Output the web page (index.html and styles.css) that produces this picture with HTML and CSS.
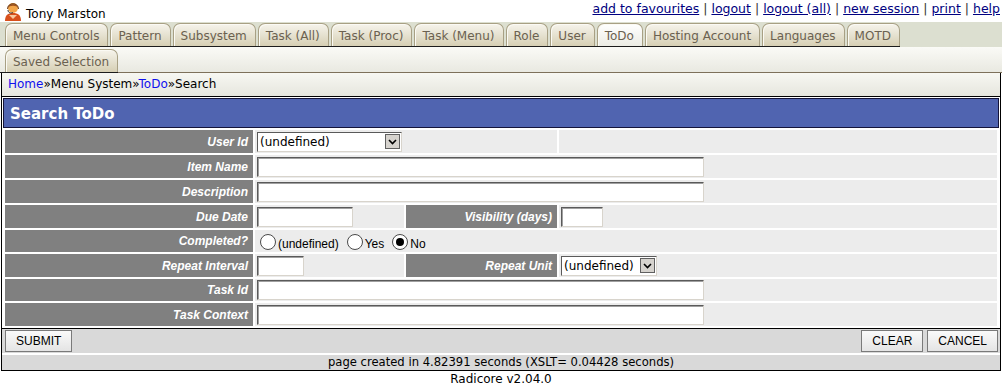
FILE: index.html
```html
<!DOCTYPE html>
<html lang="en">
<head>
  <meta charset="UTF-8" />
  <title>Search ToDo</title>
  <link rel="stylesheet" href="styles.css">
</head>
<body>

<!-- Header -->
<div class="header">
  <div class="user">
    <svg class="avatar" width="18" height="20" viewBox="0 0 18 20">
      <path d="M1 20 C1 14 4 12 9 12 C14 12 17 14 17 20 Z" fill="#d8501c"/>
      <path d="M5 14 L9 18 L13 14 Z" fill="#f6c9a0"/>
      <circle cx="9" cy="7" r="5" fill="#f2a64a"/>
      <path d="M4 7 C4 2 14 2 14 7 C13 4 5 4 4 7 Z" fill="#a0521c"/>
      <path d="M3.5 8 C3.5 1 14.5 1 14.5 8" fill="none" stroke="#6a3a1a" stroke-width="1"/>
      <path d="M4 9 C4 12 7 12.5 9 11.5" fill="none" stroke="#333" stroke-width="1"/>
    </svg>
    <span class="name">Tony Marston</span>
  </div>
  <div class="links">
    <a href="#">add to favourites</a> | <a href="#">logout</a> | <a href="#">logout (all)</a> | <a href="#">new session</a> | <a href="#">print</a> | <a href="#">help</a>
  </div>
</div>

<!-- Menu tabs -->
<div class="menubar">
  <div class="tabrow first">
    <ul class="tabs">
      <li>Menu Controls</li>
      <li>Pattern</li>
      <li>Subsystem</li>
      <li>Task (All)</li>
      <li>Task (Proc)</li>
      <li>Task (Menu)</li>
      <li>Role</li>
      <li>User</li>
      <li class="current">ToDo</li>
      <li>Hosting Account</li>
      <li>Languages</li>
      <li>MOTD</li>
    </ul>
  </div>
  <div class="tabrow second">
    <ul class="tabs">
      <li>Saved Selection</li>
    </ul>
  </div>
</div>

<div class="main">
  <div class="crumbs"><a href="#">Home</a>»Menu System»<a href="#">ToDo</a>»Search</div>

  <div class="content">
    <h1 class="title">Search ToDo</h1>

    <div class="form">
      <div class="label">User Id</div>
      <div class="field span2">
        <div class="select wide"><span>(undefined)</span><i class="arrow"><svg width="9" height="6" viewBox="0 0 9 6"><path d="M1 1 L4.5 4.5 L8 1" fill="none" stroke="#000" stroke-width="1.6"/></svg></i></div>
      </div>
      <div class="field"></div>

      <div class="label">Item Name</div>
      <div class="field span3"><span class="input long"></span></div>

      <div class="label">Description</div>
      <div class="field span3"><span class="input long"></span></div>

      <div class="label">Due Date</div>
      <div class="field"><span class="input date"></span></div>
      <div class="label">Visibility (days)</div>
      <div class="field"><span class="input days"></span></div>

      <div class="label">Completed?</div>
      <div class="field span3 radios">
        <span class="radio"></span><span class="opt">(undefined)</span>
        <span class="radio"></span><span class="opt">Yes</span>
        <span class="radio checked"></span><span class="opt">No</span>
      </div>

      <div class="label">Repeat Interval</div>
      <div class="field"><span class="input interval"></span></div>
      <div class="label">Repeat Unit</div>
      <div class="field">
        <div class="select short"><span>(undefined)</span><i class="arrow"><svg width="9" height="6" viewBox="0 0 9 6"><path d="M1 1 L4.5 4.5 L8 1" fill="none" stroke="#000" stroke-width="1.6"/></svg></i></div>
      </div>

      <div class="label">Task Id</div>
      <div class="field span3"><span class="input long"></span></div>

      <div class="label">Task Context</div>
      <div class="field span3"><span class="input long"></span></div>
    </div>

    <div class="actions">
      <button>SUBMIT</button>
      <div class="right">
        <button>CLEAR</button>
        <button>CANCEL</button>
      </div>
    </div>
    <div class="timing">page created in 4.82391 seconds (XSLT= 0.04428 seconds)</div>
  </div>
</div>

<div class="version">Radicore v2.04.0</div>

</body>
</html>
```

FILE: styles.css
```css
body {
  margin: 0;
  font-family: 'DejaVu Sans', Verdana, sans-serif;
  font-size: 12px;
  color: #000;
  background: #fff;
}

/* header */
.header {
  display: flex;
  justify-content: space-between;
  height: 22px;
}
.user {
  display: flex;
  align-items: flex-end;
  padding-left: 4px;
}
.avatar {
  margin-bottom: 1px;
}
.name {
  margin-left: 4px;
  line-height: 16px;
}
.links {
  font-size: 12.5px;
  padding-top: 1px;
  padding-right: 2px;
  color: #333;
}
.links a {
  color: #000080;
}

/* tabs */
.tabrow {
  display: flex;
  padding-left: 5px;
}
.tabrow.first {
  background: #dcdfd0;
}
.tabrow.second {
  background: linear-gradient(#fafaf6, #e9e9e1);
  border-bottom: 1px solid #7d705a;
  padding-top: 1px;
  height: 24px;
}
.tabs {
  display: flex;
  gap: 2px;
  list-style: none;
  margin: 0 0 0 -5px;
  padding: 0 0 0 5px;
  border-bottom: 1px solid #1c1c1c;
}
.tabrow.second .tabs {
  margin-bottom: -1px;
}
.tabs li {
  height: 22px;
  line-height: 24px;
  padding: 0 8px 0 7px;
  margin-top: 1px;
  color: #6b6150;
  font-size: 12px;
  border: 1px solid #a8a084;
  border-bottom: none;
  border-radius: 7px 7px 0 0;
  background: linear-gradient(#f6f4ec, #d6cfb4);
  box-shadow: inset 1px 1px 0 #fbfaf4;
}
.tabs li.current {
  background: linear-gradient(#ffffff, #ecece4);
}

/* main frame */
.main {
  margin: 0 1px;
  border: 1px solid #000;
  border-top: none;
}
.crumbs {
  height: 23px;
  line-height: 23px;
  padding-left: 6px;
  background: linear-gradient(#f7f7f2, #e6e6de);
  border-bottom: 1px solid #000;
}
.crumbs a {
  color: #1010ee;
  text-decoration: none;
}

.title {
  margin: 1px 1px 0;
  height: 28px;
  line-height: 30px;
  padding-left: 6px;
  font-size: 15px;
  font-weight: bold;
  color: #fff;
  background: #5064b0;
  border: 1px solid #14143a;
}

/* search form */
.form {
  display: grid;
  grid-template-columns: 248px 149px 151px 1fr;
  grid-template-rows: 23px 23px 23px 23px 22px 23px 22px 23px;
  gap: 2px;
  padding: 2px 3px 0;
}
.label {
  background: #808080;
  color: #fff;
  font-family: 'Liberation Sans', Arial, sans-serif;
  font-size: 12px;
  font-weight: bold;
  font-style: italic;
  padding-right: 5px;
  display: flex;
  align-items: center;
  justify-content: flex-end;
}
.field {
  background: #ececec;
  display: flex;
  align-items: center;
  padding-left: 2px;
}
.span2 {
  grid-column: span 2;
}
.span3 {
  grid-column: span 3;
}
.input {
  display: block;
  height: 18px;
  background: #fff;
  border: 1px solid;
  border-color: #5a5a5a #d8d4cc #d8d4cc #5a5a5a;
  box-shadow: inset 1px 1px 0 #a0a0a0;
}
.input.long { width: 445px; }
.input.date { width: 94px; }
.input.days { width: 40px; }
.input.interval { width: 45px; }

.select {
  display: flex;
  align-items: center;
  height: 18px;
  background: #fff;
  border: 1px solid;
  border-color: #5a5a5a #d8d4cc #d8d4cc #5a5a5a;
  font-size: 12px;
  padding-left: 2px;
}
.select span {
  flex: 1;
}
.select.wide { width: 141px; }
.select.short { width: 92px; }
.arrow {
  width: 15px;
  height: 15px;
  margin-right: 1px;
  background: #d6d3ce;
  border: 1px solid #606060;
  box-sizing: border-box;
  display: flex;
  align-items: center;
  justify-content: center;
}

.radios {
  font-family: 'Liberation Sans', Arial, sans-serif;
  font-size: 12px;
  padding-left: 5px;
}
.radio {
  width: 14px;
  height: 14px;
  border: 1px solid #4a4a4a;
  border-radius: 50%;
  background: #fff;
  position: relative;
  margin-right: 2px;
  margin-top: 2px;
}
.radio.checked::after {
  content: '';
  position: absolute;
  left: 3px;
  top: 3px;
  width: 8px;
  height: 8px;
  border-radius: 50%;
  background: #000;
}
.opt {
  margin-right: 8px;
  margin-top: 5px;
}

/* buttons and footer */
.actions {
  display: flex;
  justify-content: space-between;
  align-items: center;
  margin-top: 2px;
  border-top: 1px solid #000;
  background: #d9d9d9;
  height: 24px;
  padding: 0 2px 0 3px;
}
.actions .right {
  display: flex;
  gap: 4px;
}
button {
  font-family: 'Liberation Sans', Arial, sans-serif;
  font-size: 12px;
  height: 22px;
  padding: 0 10px;
  background: linear-gradient(#fafafa, #e4e4e4);
  border: 1px solid #7a7a7a;
  color: #000;
}
.timing {
  margin-top: 2px;
  background: #d9d9d9;
  text-align: center;
  font-size: 11.6px;
  height: 15px;
  line-height: 15px;
}
.version {
  text-align: center;
  line-height: 15px;
  margin-top: 1px;
}
```
